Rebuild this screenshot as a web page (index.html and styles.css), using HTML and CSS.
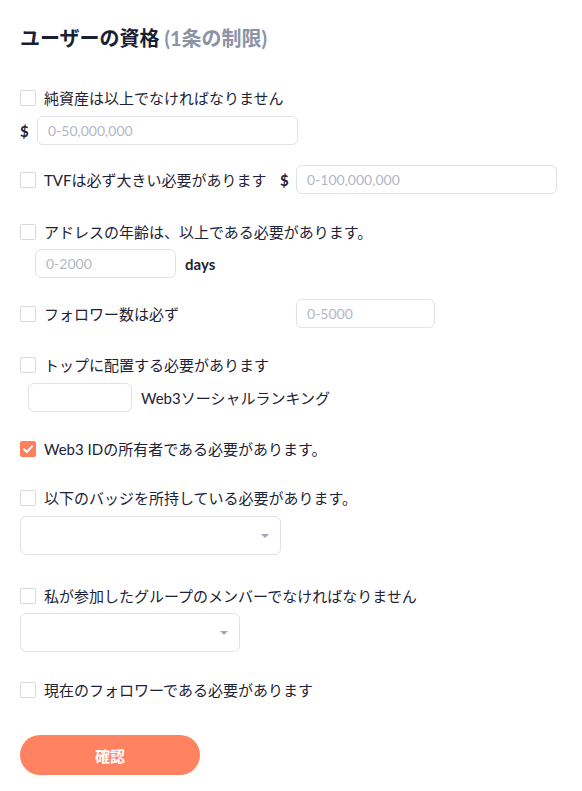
FILE: index.html
```html
<!DOCTYPE html>
<html lang="ja">
<head>
<meta charset="utf-8">
<title>ユーザーの資格</title>
<link rel="stylesheet" href="styles.css">
</head>
<body>
<div class="page">
  <h1 class="title">ユーザーの資格 <span class="title-sub">(1条の制限)</span></h1>

  <div class="group g1">
    <label class="check-line"><span class="box"></span><span class="label">純資産は以上でなければなりません</span></label>
    <div class="field-row">
      <span class="unit">$</span>
      <input class="input w261" placeholder="0-50,000,000">
    </div>
  </div>

  <div class="group g2">
    <div class="inline-row">
      <label class="check-line fixed260"><span class="box"></span><span class="label">TVFは必ず大きい必要があります</span></label>
      <span class="unit unit-col">$</span>
      <input class="input w261" placeholder="0-100,000,000">
    </div>
  </div>

  <div class="group g3">
    <label class="check-line"><span class="box"></span><span class="label">アドレスの年齢は、以上である必要があります。</span></label>
    <div class="field-row indent15">
      <input class="input w141" placeholder="0-2000">
      <span class="unit days">days</span>
    </div>
  </div>

  <div class="group g4">
    <div class="inline-row">
      <label class="check-line fixed276"><span class="box"></span><span class="label">フォロワー数は必ず</span></label>
      <input class="input w139" placeholder="0-5000">
    </div>
  </div>

  <div class="group g5">
    <label class="check-line"><span class="box"></span><span class="label">トップに配置する必要があります</span></label>
    <div class="field-row indent8">
      <input class="input w104">
      <span class="rank">Web3ソーシャルランキング</span>
    </div>
  </div>

  <div class="group g6">
    <label class="check-line"><span class="box checked"><svg viewBox="0 0 16 16" width="16" height="16"><path d="M4 8.2 L6.8 11 L12 5.4" fill="none" stroke="#fff" stroke-width="2" stroke-linecap="round" stroke-linejoin="round"/></svg></span><span class="label">Web3 IDの所有者である必要があります。</span></label>
  </div>

  <div class="group g7">
    <label class="check-line"><span class="box"></span><span class="label">以下のバッジを所持している必要があります。</span></label>
    <div class="select w261s"><span class="caret"></span></div>
  </div>

  <div class="group g8">
    <label class="check-line"><span class="box"></span><span class="label">私が参加したグループのメンバーでなければなりません</span></label>
    <div class="select w220s"><span class="caret"></span></div>
  </div>

  <div class="group g9">
    <label class="check-line"><span class="box"></span><span class="label">現在のフォロワーである必要があります</span></label>
  </div>

  <button class="confirm">確認</button>
</div>
</body>
</html>
```

FILE: styles.css
```css
* { box-sizing: border-box; }
html, body {
  margin: 0;
  padding: 0;
  background: #ffffff;
}
body {
  font-family: Lato, "Noto Sans CJK JP", sans-serif;
  color: #1d2235;
  font-size: 15px;
}
.page {
  padding: 26px 20px 0 20px;
}
.title {
  margin: 0;
  font-size: 20px;
  line-height: 24px;
  font-weight: 700;
  color: #1a1f36;
}
.title-sub {
  color: #8b93a7;
}
.group { margin-top: 26px; }
.g1 { margin-top: 37px; }
.g2 { margin-top: 20px; }
.g3 { margin-top: 27px; }
.g4 { margin-top: 21px; }
.g5 { margin-top: 26px; }
.g6 { margin-top: 26px; }
.g7 { margin-top: 27px; }
.g8 { margin-top: 30px; }
.g9 { margin-top: 27px; }

.check-line {
  display: flex;
  align-items: center;
  height: 22px;
  line-height: 22px;
  cursor: pointer;
}
.box {
  flex: none;
  width: 16px;
  height: 16px;
  border: 1px solid #d9d9d9;
  border-radius: 2px;
  background: #fff;
  margin-right: 8px;
  display: flex;
  align-items: center;
  justify-content: center;
}
.box.checked {
  background: #ff7f5c;
  border-color: #ff7f5c;
}
.box.checked svg { display: block; margin: -1px; }
.label {
  font-size: 15px;
  white-space: nowrap;
  color: #1d2235;
}
.fixed260 { width: 260px; flex: none; }
.fixed276 { width: 276px; flex: none; }

.field-row {
  display: flex;
  align-items: center;
  margin-top: 7px;
}
.g3 .field-row, .g8 .field-row { margin-top: 6px; }
.inline-row {
  display: flex;
  align-items: center;
  height: 29px;
}
.unit {
  font-weight: 700;
  font-size: 15px;
  color: #1d2235;
}
.g1 .unit { width: 17px; }
.unit-col { width: 16px; flex: none; }
.days { margin-left: 9px; }
.indent15 { padding-left: 15px; }
.indent8 { padding-left: 8px; }
.rank {
  margin-left: 9px;
  font-size: 15px;
}
.input {
  height: 29px;
  border: 1px solid #dfe2ee;
  border-radius: 6px;
  padding: 0 10px;
  font-family: Lato, "Noto Sans CJK JP", sans-serif;
  font-size: 14px;
  color: #1d2235;
  background: #fff;
  outline: none;
}
.input::placeholder { color: #b3b7c3; }
.w261 { width: 261px; }
.w141 { width: 141px; }
.w139 { width: 139px; }
.w104 { width: 104px; }

.select {
  position: relative;
  height: 39px;
  border: 1px solid #dfe2ee;
  border-radius: 6px;
  margin-top: 7px;
  background: #fff;
}
.g8 .select { margin-top: 6px; }
.w261s { width: 261px; }
.w220s { width: 220px; }
.caret {
  position: absolute;
  right: 11px;
  top: 17px;
  width: 0;
  height: 0;
  border-left: 4px solid transparent;
  border-right: 4px solid transparent;
  border-top: 4px solid #a3a7b3;
}

.confirm {
  display: block;
  margin-top: 34px;
  width: 180px;
  height: 40px;
  border: none;
  border-radius: 20px;
  background: #ff8361;
  color: #ffffff;
  font-family: Lato, "Noto Sans CJK JP", sans-serif;
  font-size: 15px;
  font-weight: 700;
  cursor: pointer;
}
```
